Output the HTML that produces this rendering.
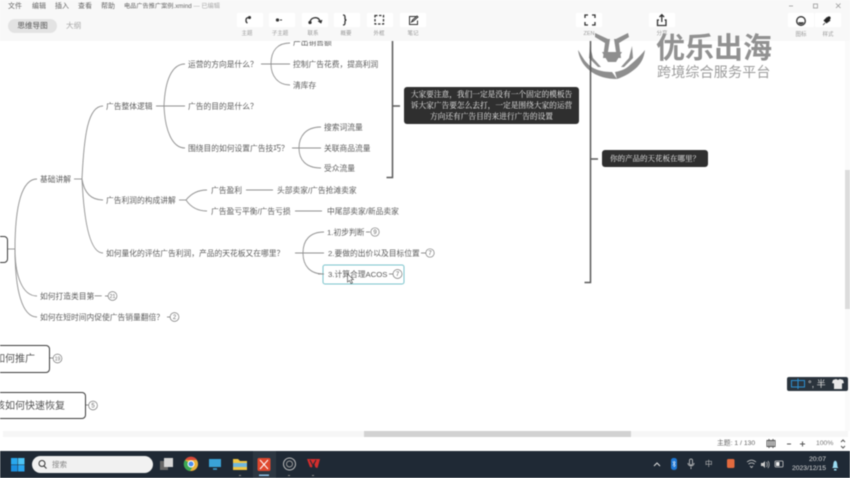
<!DOCTYPE html>
<html lang="zh">
<head>
<meta charset="utf-8">
<title>XMind</title>
<style>
html,body{margin:0;padding:0;width:850px;height:478px;overflow:hidden;background:#fff}
body{position:relative;font-family:"Liberation Sans","Noto Sans CJK SC",sans-serif;color:#666}
#wrap{position:absolute;left:0;top:0;width:850px;height:478px;overflow:hidden;filter:blur(.45px)}
.a{position:absolute;white-space:nowrap;line-height:1}
.t{position:absolute;white-space:nowrap;font-size:7.75px;line-height:10px;color:#5c5c5c;margin-top:.7px}
.lb{position:absolute;white-space:nowrap;font-size:5.5px;line-height:7px;color:#9a9a9a;text-align:center;width:30px}
.btn{position:absolute;top:13px;width:26px;height:14px;background:#fff}
.menu{position:absolute;top:2.5px;font-size:7px;line-height:8px;color:#666;white-space:nowrap}
.dark{position:absolute;background:#2f2f2f;border-radius:3px;color:#f0f0f0;text-align:center;font-family:"Liberation Serif","Noto Serif CJK SC",serif;white-space:nowrap}
.big{position:absolute;border:1.8px solid #3c3c3c;border-radius:4px;background:#fff;font-size:10px;color:#555;white-space:nowrap;box-sizing:border-box}
</style>
</head>
<body>
<div id="wrap">
<!-- top bar -->
<div class="a" style="left:0;top:0;width:850px;height:41px;background:#f8f8f8"></div>
<div class="menu" style="left:8px">文件</div>
<div class="menu" style="left:32px">编辑</div>
<div class="menu" style="left:55px">插入</div>
<div class="menu" style="left:78px">查看</div>
<div class="menu" style="left:101px">帮助</div>
<div class="menu" style="left:124px;font-size:6.2px">电品广告推广案例.xmind <span style="color:#aaa">— 已编辑</span></div>
<div class="a" style="left:8px;top:19px;width:49px;height:14px;border-radius:7px;background:#e3e3e3;font-size:7.6px;line-height:14px;text-align:center;color:#555">思维导图</div>
<div class="a" style="left:66px;top:22px;font-size:7.6px;color:#aaa">大纲</div>

<div class="btn" style="left:237px"></div><div class="btn" style="left:269px"></div><div class="btn" style="left:302px"></div><div class="btn" style="left:334px"></div><div class="btn" style="left:367px"></div><div class="btn" style="left:400px"></div>
<div class="btn" style="left:576px"></div><div class="btn" style="left:649px"></div><div class="btn" style="left:788px"></div><div class="btn" style="left:815px"></div>
<div class="lb" style="left:232px;top:31px">主题</div>
<div class="lb" style="left:265px;top:31px">子主题</div>
<div class="lb" style="left:298px;top:31px">联系</div>
<div class="lb" style="left:331px;top:31px">概要</div>
<div class="lb" style="left:364px;top:31px">外框</div>
<div class="lb" style="left:398px;top:31px">笔记</div>
<div class="lb" style="left:574px;top:31px">ZEN</div>
<div class="lb" style="left:647px;top:31px">分享</div>
<div class="lb" style="left:786px;top:32px">图标</div>
<div class="lb" style="left:813px;top:32px">样式</div>

<!-- connectors + toolbar icons -->
<svg class="a" style="left:0;top:0" width="850" height="478" viewBox="0 0 850 478" fill="none">
 <!-- toolbar icons -->
 <g stroke="#333" stroke-width="1.3" fill="none">
  <path d="M249 17.5c-2 0-3 1-3 2.5s0 2.500 1.500 3"/><circle cx="249.500" cy="17.500" r=".9" fill="#333"/>
  <circle cx="277.500" cy="20" r="1" fill="#333"/><path d="M280 20h2" stroke-width="1"/>
  <path d="M310 22c1-5 8-6 10-1"/><path d="M318 21l3 2 1-3" fill="#333" stroke-width=".8"/><circle cx="310" cy="22.500" r="1" fill="#333"/>
  <path d="M343 15c2 0 2 1 2 2v1.500c0 1 .5 1.500 1.500 1.500-1 0-1.500.5-1.500 1.500V23c0 1 0 2-2 2"/>
  <path d="M375 15.500h8.500v8.500H375z" stroke-dasharray="2.500 1.500"/>
  <path d="M416 16.500h-6.500v8h8v-4M411.500 22l1-2 4.500-4 1 1-4.500 4z" stroke-width="1"/>
  <path d="M585 18v-3h3M592 15h3v3M595 22v3h-3M588 25h-3v-3"/>
  <path d="M659 20h-1.500v5.500h8.500V20h-1.500M661.800 22v-7M659.500 17l2.300-2.300 2.300 2.300"/>
  <circle cx="801" cy="21" r="4.300"/><path d="M798.500 22.300c1 2 4 2 5 0" stroke-width=".9" fill="#333"/>
  <path d="M827 17.500l3 3-3.500 2.500-2.500-2.500z" fill="#222" stroke-width=".8"/><path d="M825 23l-2 2" stroke-width=".8"/><circle cx="829" cy="18" r="1.600" fill="#222" stroke="none"/>
 </g>
 <!-- window controls -->
 <g stroke="#999" stroke-width=".8">
  <path d="M789 6h4"/><rect x="813.500" y="4" width="4" height="4"/><path d="M836 3.500l4.500 4.500M840.500 3.500L836 8"/>
 </g>
 <!-- logo -->
 <g fill="#8e8e8e">
  <path d="M595 33l13 6 2 0-3 19h-4l2-15-10-6z"/>
  <path d="M628 33l-12 6-2 0 3 19h4l-2-15 10-6z"/>
  <path d="M602 52h20l-6 10h-8z"/>
  <path d="M578 50c3 4 5 9 9 13 6 7 16 9 25 9l5 7c-9 0-20-2-28-9-6-5-10-12-11-20z"/>
  <path d="M645 50c-1 8-4 14-10 19-6 5-12 8-18 10l-2-7c6-1 11-3 15-7 6-5 11-10 15-15z"/>
  <path d="M590 46l3 12 8 9-3 0-9-9z"/><path d="M632 46l-3 12-8 9 3 0 9-9z"/>
 </g>

 <!-- mind map branches -->
 <g stroke="#909090" stroke-width=".9" fill="none">
  <path d="M8 249h7"/>
  <path d="M15 249C15 205 22 179 37 179"/>
  <path d="M15 249C15 275 22 296 37 296"/>
  <path d="M15 249C15 290 22 317 37 317"/>
  <path d="M74 179h8"/>
  <path d="M82 179C84 135 88 106 103 106"/>
  <path d="M82 179C84 192 90 200 103 200"/>
  <path d="M82 179C84 222 90 253 103 253"/>
  <path d="M156 106h29"/>
  <path d="M164 106C165 80 172 64 185 64"/>
  <path d="M164 106C165 130 172 148 185 148"/>
  <path d="M261 64h29"/>
  <path d="M271 64C271 50 278 43 290 43"/>
  <path d="M271 64C271 76 278 85 290 85"/>
  <path d="M292 148h29"/>
  <path d="M299 148C299 136 306 127 321 127"/>
  <path d="M299 148C299 160 306 168 321 168"/>
  <path d="M179 200h7"/>
  <path d="M186 200C190 195 196 190 207 190"/>
  <path d="M186 200C190 206 196 211 207 211"/>
  <path d="M246 190h27M295 211h27"/>
  <path d="M295 253h29"/>
  <path d="M303 253C303 240 310 232 324 232"/>
  <path d="M303 253C303 266 310 274 324 274"/>
  <path d="M366 232h4M421 253h5M105 296h3M167 317h3M50 358h3M85 405h4"/>
 </g>
 <!-- brackets -->
 <g stroke="#5a5a5a" stroke-width="1.500" fill="none">
  <path d="M392.500 41v136.500h-6M393 106h7"/>
  <path d="M590.500 41v241.500h-6M591 159h7"/>
 </g>
 <!-- selection box -->
 <rect x="323" y="265" width="81" height="19" rx="2" fill="#fff" stroke="#7cc4cc" stroke-width="1"/>
 <path d="M318 274h6M389 274h4" stroke="#909090" stroke-width=".9"/>
 <!-- circles -->
 <g stroke="#777" stroke-width=".7" fill="#fff">
  <circle cx="375" cy="232" r="4.200"/><circle cx="430" cy="253" r="4.200"/><circle cx="397.500" cy="274" r="4.500"/>
  <circle cx="112.500" cy="296" r="4.400"/><circle cx="174.500" cy="317" r="4.400"/><circle cx="57.500" cy="358.500" r="4.400"/><circle cx="93" cy="405.500" r="4.400"/>
 </g>
 <g font-family="Liberation Sans" font-size="6" fill="#666" text-anchor="middle">
  <text x="375" y="234.200">9</text><text x="430" y="255.200">7</text><text x="397.500" y="276.200">7</text>
  <text x="112.500" y="298" font-size="5.200">21</text><text x="174.500" y="319.200">2</text><text x="57.500" y="360.500" font-size="5">19</text><text x="93" y="407.700">5</text>
 </g>
</svg>

<!-- watermark text -->
<div class="a" style="left:656px;top:35px;font-size:29px;font-weight:bold;color:#919191;letter-spacing:0">优乐出海</div>
<div class="a" style="left:657px;top:65px;font-size:14px;color:#9c9c9c;letter-spacing:.2px">跨境综合服务平台</div>

<!-- topics -->
<div class="t" style="left:293px;top:37px;clip-path:inset(3.300px 0 0 0)">产出销售额</div>
<div class="t" style="left:188px;top:59px">运营的方向是什么？</div>
<div class="t" style="left:293px;top:59px">控制广告花费，提高利润</div>
<div class="t" style="left:293px;top:80px">清库存</div>
<div class="t" style="left:106px;top:101px">广告整体逻辑</div>
<div class="t" style="left:188px;top:101px">广告的目的是什么？</div>
<div class="t" style="left:188px;top:143px">围绕目的如何设置广告技巧？</div>
<div class="t" style="left:324px;top:122px">搜索词流量</div>
<div class="t" style="left:324px;top:143px">关联商品流量</div>
<div class="t" style="left:324px;top:163px">受众流量</div>
<div class="t" style="left:40px;top:174px">基础讲解</div>
<div class="t" style="left:106px;top:195px">广告利润的构成讲解</div>
<div class="t" style="left:211px;top:185px">广告盈利</div>
<div class="t" style="left:277px;top:185px">头部卖家/广告抢滩卖家</div>
<div class="t" style="left:211px;top:206px">广告盈亏平衡/广告亏损</div>
<div class="t" style="left:327px;top:206px">中尾部卖家/新品卖家</div>
<div class="t" style="left:106px;top:248px">如何量化的评估广告利润，产品的天花板又在哪里？</div>
<div class="t" style="left:327px;top:227px">1.初步判断</div>
<div class="t" style="left:328px;top:248px">2.要做的出价以及目标位置</div>
<div class="t" style="left:328px;top:269px">3.计算合理ACOS</div>
<div class="t" style="left:40px;top:291px">如何打造类目第一</div>
<div class="t" style="left:40px;top:312px">如何在短时间内促使广告销量翻倍？</div>

<!-- dark notes -->
<div class="dark" style="left:404px;top:87px;width:175px;height:37px;font-size:7.7px;line-height:11px;padding-top:2px;box-sizing:border-box">大家要注意，我们一定是没有一个固定的模板告<br>诉大家广告要怎么去打，一定是围绕大家的运营<br>方向还有广告目的来进行广告的设置</div>
<div class="dark" style="left:602px;top:150px;width:106px;height:17px;font-size:7.5px;line-height:17px">你的产品的天花板在哪里？</div>

<!-- big nodes -->
<div class="big" style="left:-20px;top:236px;width:28px;height:27px"></div>
<div class="big" style="left:-30px;top:345px;width:80px;height:28px;line-height:27px;text-align:right;padding-right:14px">如何推广</div>
<div class="big" style="left:-40px;top:392px;width:126px;height:27px;line-height:27px;text-align:right;padding-right:20px">该如何快速恢复</div>

<!-- cursor -->
<svg class="a" style="left:344px;top:272px" width="12" height="14" viewBox="0 0 12 14"><path d="M3.500 2l0 8 2-1.500 1.500 3 1.500-.7-1.500-3 2.500-.3z" fill="#fff" stroke="#555" stroke-width=".7"/></svg>

<!-- scrollbars -->
<div class="a" style="left:845px;top:41px;width:5px;height:390px;background:#fafafa"></div>
<div class="a" style="left:845px;top:170px;width:5px;height:139px;background:#dcdcdc"></div>
<div class="a" style="left:3px;top:431px;width:845px;height:6px;background:#f6f6f6"></div>
<div class="a" style="left:364px;top:431px;width:267px;height:6px;background:#d2d2d2"></div>

<!-- IME -->
<div class="a" style="left:787px;top:377px;width:61px;height:14px;background:#2b343d;border-radius:2px"></div>
<svg class="a" style="left:787px;top:377px" width="61" height="14" viewBox="0 0 61 14">
 <rect x="4.500" y="3.500" width="13" height="6.500" fill="none" stroke="#2c8fd0" stroke-width="1"/><path d="M11 1.500v10.500" stroke="#2c8fd0" stroke-width="1"/>
 <path d="M46 3l3-1 2 1 2-1 3 1 1 3-2 .5V12h-8V6.500l-2-.5z" fill="#e8e8e8"/>
</svg>
<div class="a" style="left:808px;top:379.500px;font-size:9px;color:#ddd">°, 半</div>

<!-- status bar -->
<div class="a" style="left:717px;top:441px;font-size:6.800px;color:#666">主题: 1 / 130</div>
<svg class="a" style="left:765px;top:438px" width="85" height="12" viewBox="0 0 85 12" fill="none" stroke="#555" stroke-width="1">
 <path d="M2 2.500h4v6H2zM6 2.500h4v6H6zM4 1v9M8 1v9"/>
 <path d="M22 6h4M35 6h5M37.500 3.500v5"/>
 <path d="M76 4l2-2 2 2M76 8l2 2 2-2"/>
</svg>
<div class="a" style="left:816px;top:441px;font-size:6.800px;color:#777">100%</div>

<!-- taskbar -->
<div class="a" style="left:0;top:451px;width:850px;height:27px;background:#1f2935"></div>
<div class="a" style="left:253px;top:451px;width:23px;height:27px;background:#2c3641"></div>
<div class="a" style="left:32px;top:456px;width:121px;height:17px;border-radius:9px;background:#f1f1f1"></div>
<div class="a" style="left:52px;top:461px;font-size:7.500px;color:#888">搜索</div>
<svg class="a" style="left:0;top:451px" width="850" height="27" viewBox="0 451 850 27" fill="none">
 <!-- start -->
 <rect x="11" y="458" width="6.500" height="6.500" fill="#29a8ee"/><rect x="18" y="458" width="6.500" height="6.500" fill="#4cc3f5"/>
 <rect x="11" y="465" width="6.500" height="6.500" fill="#1b8fe0"/><rect x="18" y="465" width="6.500" height="6.500" fill="#2aa5ee"/>
 <!-- search glass -->
 <circle cx="42" cy="463.500" r="3" stroke="#333" stroke-width="1"/><path d="M44 466l2.500 2.500" stroke="#333" stroke-width="1"/>
 <!-- task view -->
 <rect x="160" y="461" width="8" height="9" fill="#666"/><rect x="164" y="458" width="9" height="9" fill="#d8d8d8"/>
 <!-- chrome -->
 <circle cx="191" cy="464" r="7" fill="#e8b23a"/><path d="M185 460a7 7 0 0 1 12 0h-6z" fill="#d9483b"/><path d="M185 460a7 7 0 0 0 5 11l3-5z" fill="#3da853"/><circle cx="191" cy="464" r="3" fill="#4a8df0" stroke="#fff" stroke-width="1"/>
 <!-- monitor -->
 <rect x="209" y="459" width="12" height="8" fill="#3aa3d8"/><path d="M213 469h4" stroke="#3aa3d8" stroke-width="1.500"/>
 <!-- folder -->
 <path d="M233 459h5l2 2h7v9h-14z" fill="#f2c744"/><rect x="233" y="463" width="14" height="4" fill="#6fb7de"/><rect x="239" y="475" width="2" height="1" fill="#888"/>
 <!-- xmind -->
 <rect x="257.500" y="458" width="13" height="13" rx="1.500" fill="#e0482e"/><path d="M260 460l8 9M268 460l-8 9" stroke="#fff" stroke-width="1"/><rect x="259" y="474.500" width="10" height="1.500" fill="#8fc2e8"/>
 <!-- obs -->
 <circle cx="289.500" cy="464" r="6" stroke="#bbb" stroke-width="1"/><circle cx="289.500" cy="464" r="3" stroke="#999" stroke-width="1"/><rect x="288" y="475" width="2" height="1" fill="#888"/>
 <!-- wps -->
 <path d="M307 459h13l-2.500 9-2-.5-1.800-5-1.800 5-2-.5z" fill="#d42d2d"/><path d="M310 460l3 6 3-6" stroke="#1f2935" stroke-width="1"/><rect x="312" y="475" width="2" height="1" fill="#888"/>
 <!-- tray -->
 <path d="M654 466l3-3 3 3" stroke="#ddd" stroke-width="1"/>
 <rect x="671" y="458" width="6" height="12" rx="2.500" fill="#1e78d6"/><path d="M672.500 461.500l3 4-1.500 1.500v-6l1.500 1.500-3 3" stroke="#fff" stroke-width=".5"/>
 <rect x="689.500" y="459" width="3" height="6" rx="1.500" stroke="#ccc" stroke-width=".8"/><path d="M688 463c0 4 6 4 6 0M691 467v2" stroke="#ccc" stroke-width=".8"/>
 <rect x="727" y="459" width="7.500" height="9" rx="1.500" fill="#e26a3e"/>
 <path d="M747 462c3-2.500 6-2.500 9 0M748.500 464c2-1.500 4-1.500 6 0M750 466l1.500 1.500 1.500-1.500" stroke="#ccc" stroke-width=".8"/>
 <path d="M761 463h2l2-2v7l-2-2h-2z" fill="#ccc"/><path d="M766.500 462c1 1 1 4 0 5M768 461c1.500 2 1.500 5 0 7" stroke="#ccc" stroke-width=".7"/>
 <rect x="775" y="461" width="8" height="6" rx="1" stroke="#ccc" stroke-width=".8"/><rect x="776" y="462" width="3.500" height="4" fill="#eee"/>
 <path d="M832 468c1.500-1 1-3 1.500-5 .5-3 3-3 3.500 0 .500 2 0 4 1.500 5z" fill="#9bdcf2"/><rect x="834" y="469" width="2.500" height="1.500" fill="#9bdcf2"/>
</svg>
<div class="a" style="left:705px;top:460px;font-size:7.500px;color:#bbb">中</div>
<div class="a" style="left:776px;top:457px;width:50px;text-align:right;font-size:6.800px;color:#ddd">20:07</div>
<div class="a" style="left:776px;top:466px;width:50px;text-align:right;font-size:6.800px;color:#ddd">2023/12/15</div>
</div>
</body>
</html>
